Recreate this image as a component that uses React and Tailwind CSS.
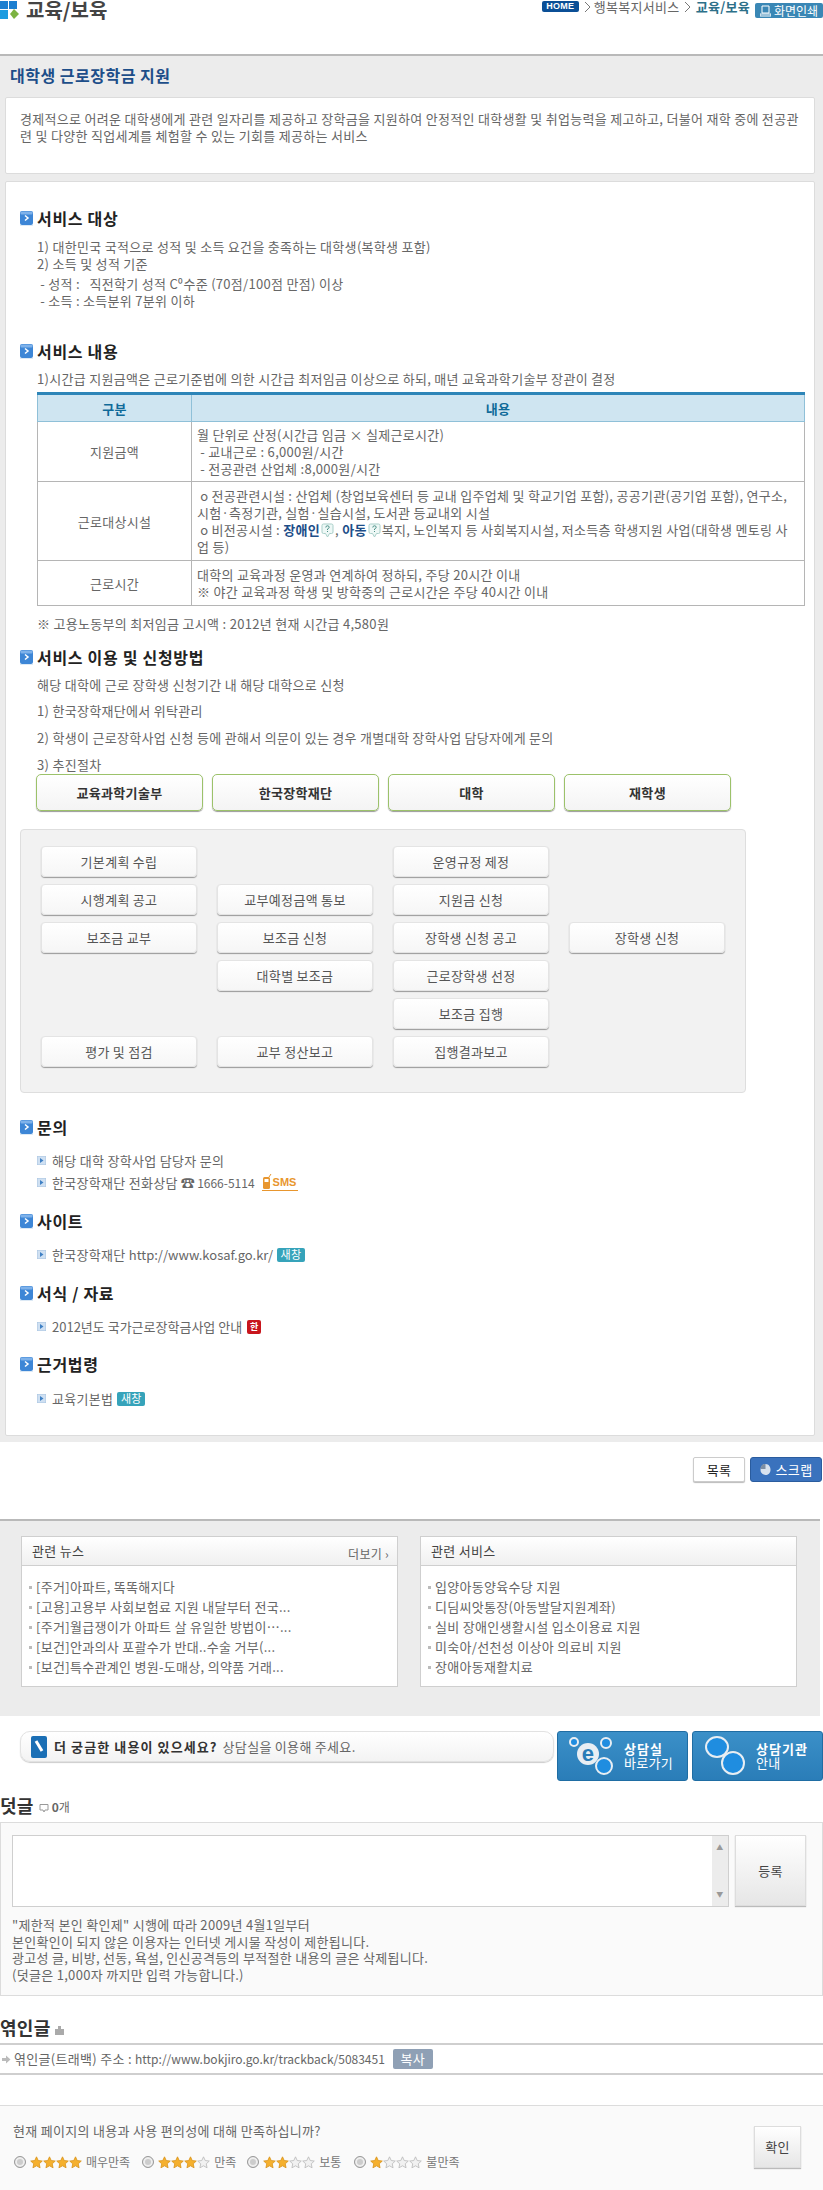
import React from 'react';

const SectionIcon = () => (
  <svg width="13" height="15" viewBox="0 0 13 15" className="shrink-0">
    <rect x="0" y="0" width="13" height="14" rx="2" fill="#3d86d6" />
    <rect x="0.5" y="0.5" width="12" height="3" rx="1" fill="#7fb2ea" />
    <rect x="0" y="14" width="13" height="1" fill="#dce9f5" />
    <path d="M5 4.5 L8 7 L5 9.5" fill="none" stroke="#ffffff" strokeWidth="1.5" />
  </svg>
);

const SectionTitle = ({ children }) => (
  <h3 className="flex h-5 items-center gap-[4px] pl-[14px] text-[16px] font-bold leading-5 tracking-[0.7px] text-[#222]">
    <SectionIcon />
    <span>{children}</span>
  </h3>
);

const Line = ({ className = '', children }) => (
  <p className={`h-[17px] whitespace-nowrap pl-[31px] leading-[17px] ${className}`}>{children}</p>
);

const ListItem = ({ className = '', children }) => (
  <div className={`flex h-[17px] items-center whitespace-nowrap pl-[31px] leading-[17px] ${className}`}>
    <svg width="9" height="9" viewBox="0 0 9 9" className="mr-[6px] shrink-0">
      <rect x="0" y="0" width="9" height="9" fill="#cfe0f2" stroke="#a9c4e0" />
      <path d="M3 2 L6.5 4.5 L3 7 Z" fill="#3f80c4" />
    </svg>
    {children}
  </div>
);

const NewWin = () => (
  <span className="ml-[4px] inline-flex h-[14px] w-[28px] items-center justify-center rounded-[2px] bg-[#36a3ba] text-[11px] leading-none text-white">
    새창
  </span>
);

const Help = () => (
  <svg width="13" height="15" viewBox="0 0 13 15" className="mx-[1px] inline-block align-middle">
    <path d="M2.5 1 H10.5 Q12 1 12 2.5 V9 Q12 10.5 10.5 10.5 H8.5 L6.5 14 L4.5 10.5 H2.5 Q1 10.5 1 9 V2.5 Q1 1 2.5 1 Z" fill="#eef8f6" stroke="#a9cfc9" />
    <path d="M4.8 4.5 Q4.8 2.8 6.5 2.8 Q8.2 2.8 8.2 4.3 Q8.2 5.3 6.5 6 V7" fill="none" stroke="#4a8f86" />
    <rect x="6" y="8" width="1" height="1" fill="#4a8f86" />
  </svg>
);

const Chevron = ({ className = '' }) => (
  <svg width="7" height="12" viewBox="0 0 7 12" className={`mt-[1px] shrink-0 ${className}`}>
    <path d="M1 1 L6 6 L1 11" fill="none" stroke="#777" />
  </svg>
);

const FlowButton = ({ className = '', children }) => (
  <div className={`flex h-[31px] items-center justify-center rounded-[4px] border border-[#e4e4e4] bg-gradient-to-b from-white to-[#f6f6f6] text-[#555] shadow-[0_1px_1px_#999] ${className}`}>
    {children}
  </div>
);

const Star = ({ on }) => (
  <svg width="13" height="13" viewBox="0 0 24 24">
    <path
      d="M12 1.5l3.2 6.9 7.5.9-5.6 5.1 1.5 7.4L12 18.1l-6.6 3.7 1.5-7.4L1.3 9.3l7.5-.9z"
      fill={on ? '#f5b02e' : '#f1f1f1'}
      stroke={on ? '#d9931a' : '#b9b9b9'}
      strokeWidth="1.5"
    />
  </svg>
);

const Rating = ({ count, label, className = '' }) => (
  <div className={`flex items-center ${className}`}>
    <span className="mr-[4px] h-[12px] w-[12px] rounded-full border border-[#999] bg-[#ccc] shadow-[inset_0_0_0_2px_#eee]" />
    {[1, 2, 3, 4].map((n) => (
      <Star key={n} on={n <= count} />
    ))}
    <span className="ml-[4px] text-[12px] tracking-normal text-[#777]">{label}</span>
  </div>
);

const ListBox = ({ title, more, items }) => (
  <div className="h-[151px] w-[377px] border border-[#cfcfcf] bg-white">
    <div className="flex h-[29px] items-center justify-between border-b border-[#cfcfcf] bg-gradient-to-b from-white to-[#f0f0f0] pl-[10px] pr-[8px]">
      <span className="text-[#444]">{title}</span>
      {more && <span className="mt-[6px] text-[12px] text-[#666]">더보기 ›</span>}
    </div>
    <ul className="pl-[7px] pt-[11px]">
      {items.map((t) => (
        <li key={t} className="flex h-[20px] items-center whitespace-nowrap leading-[20px] text-[#666]">
          <span className="mr-[4px] h-[3px] w-[3px] bg-[#bbb]" />
          {t}
        </li>
      ))}
    </ul>
  </div>
);

const flowRows = [
  ['기본계획 수립', '', '운영규정 제정', ''],
  ['시행계획 공고', '교부예정금액 통보', '지원금 신청', ''],
  ['보조금 교부', '보조금 신청', '장학생 신청 공고', '장학생 신청'],
  ['', '대학별 보조금', '근로장학생 선정', ''],
  ['', '', '보조금 집행', ''],
  ['평가 및 점검', '교부 정산보고', '집행결과보고', ''],
];

export default function App() {
  return (
    <div className="h-[2190px] w-[823px] overflow-hidden bg-white font-['Noto_Sans_CJK_KR','Liberation_Sans',sans-serif] text-[13px] tracking-[0.3px] text-[#666]">
      {/* Page header */}
      <div className="flex h-[56px] items-start justify-between border-b-2 border-[#b9b9b9]">
        <div className="flex items-center">
          <svg width="19" height="19" viewBox="0 0 19 19">
            <rect x="0" y="0" width="8" height="8" fill="#1c7fd0" />
            <rect x="9" y="0" width="8" height="8" fill="#1c7fd0" />
            <rect x="0" y="9" width="8" height="9" fill="#1c9be0" />
            <path d="M14 8 L19 13 L14 18 L10 13 Z" fill="#7cb342" />
          </svg>
          <span className="ml-[7px] text-[20px] font-bold leading-[20px] tracking-normal text-[#444]">교육/보육</span>
        </div>
        <div className="flex items-start">
          <span className="mt-[1px] flex h-[11px] w-[37px] items-center justify-center rounded-[2px] bg-[#0b4f96] font-['Liberation_Sans',sans-serif] text-[9px] font-bold text-white">
            HOME
          </span>
          <Chevron className="ml-[5px]" />
          <span className="ml-[3px] text-[13px] leading-[14px]">행복복지서비스</span>
          <Chevron className="ml-[4px]" />
          <span className="ml-[5px] text-[13px] font-bold leading-[14px] text-[#2d7089]">교육/보육</span>
          <span className="ml-[5px] mt-[3px] flex h-[15px] w-[68px] items-center justify-center gap-[3px] rounded-[2px] bg-[#3a87b5] text-[12px] leading-none tracking-normal text-white">
            <svg width="11" height="12" viewBox="0 0 11 12">
              <path d="M2 1h7v7H2zM0 9h11v2H0z" fill="none" stroke="#fff" />
            </svg>
            화면인쇄
          </span>
        </div>
      </div>

      {/* Article */}
      <div className="h-[1386px] bg-[#ececec] px-[5px] pl-[5px]">
        <h2 className="pl-[5px] pt-[10px] text-[16px] font-bold leading-[18px] tracking-[0.5px] text-[#1d4e89]">대학생 근로장학금 지원</h2>
        <div className="mt-[13px] h-[77px] w-[810px] rounded-[2px] border border-[#dcdcdc] bg-white pl-[14px] pt-[12px] leading-[17px]">
          <p className="whitespace-nowrap">
            경제적으로 어려운 대학생에게 관련 일자리를 제공하고 장학금을 지원하여 안정적인 대학생활 및 취업능력을 제고하고, 더불어 재학 중에 전공관
            <br />
            련 및 다양한 직업세계를 체험할 수 있는 기회를 제공하는 서비스
          </p>
        </div>

        <div className="mt-[7px] h-[1255px] w-[810px] rounded-[2px] border border-[#dcdcdc] bg-white pt-[26px]">
          <SectionTitle>서비스 대상</SectionTitle>
          <Line className="mt-[10px]">1) 대한민국 국적으로 성적 및 소득 요건을 충족하는 대학생(복학생 포함)</Line>
          <Line>2) 소득 및 성적 기준</Line>
          <Line className="mt-[3px]">&nbsp;- 성적 :&nbsp;&nbsp; 직전학기 성적 C⁰수준 (70점/100점 만점) 이상</Line>
          <Line>&nbsp;- 소득 : 소득분위 7분위 이하</Line>

          <div className="mt-[32px]">
            <SectionTitle>서비스 내용</SectionTitle>
          </div>
          <Line className="mt-[9px]">1)시간급 지원금액은 근로기준법에 의한 시간급 최저임금 이상으로 하되, 매년 교육과학기술부 장관이 결정</Line>

          <table className="ml-[31px] mt-[5px] w-[768px] table-fixed border-collapse leading-[17px]">
            <colgroup>
              <col className="w-[154px]" />
              <col />
            </colgroup>
            <thead>
              <tr className="h-[28px] border-t-[3px] border-[#2d85b8] bg-[#cfe5f1] font-bold text-[#0f6a99]">
                <th className="border border-t-0 border-[#8fc0d8]">구분</th>
                <th className="border border-t-0 border-[#8fc0d8]">내용</th>
              </tr>
            </thead>
            <tbody>
              <tr className="h-[60px]">
                <td className="border border-[#b5b5b5] text-center">지원금액</td>
                <td className="whitespace-nowrap border border-[#b5b5b5] pl-[5px]">
                  월 단위로 산정(시간급 임금 × 실제근로시간)
                  <br />
                  &nbsp;- 교내근로 : 6,000원/시간
                  <br />
                  &nbsp;- 전공관련 산업체 :8,000원/시간
                </td>
              </tr>
              <tr className="h-[79px]">
                <td className="border border-[#b5b5b5] text-center">근로대상시설</td>
                <td className="whitespace-nowrap border border-[#b5b5b5] pl-[5px]">
                  &nbsp;o 전공관련시설 : 산업체 (창업보육센터 등 교내 입주업체 및 학교기업 포함), 공공기관(공기업 포함), 연구소,
                  <br />
                  시험·측정기관, 실험·실습시설, 도서관 등교내외 시설
                  <br />
                  &nbsp;o 비전공시설 : <b className="text-[#1d4e89]">장애인</b>
                  <Help />, <b className="text-[#1d4e89]">아동</b>
                  <Help />복지, 노인복지 등 사회복지시설, 저소득층 학생지원 사업(대학생 멘토링 사
                  <br />
                  업 등)
                </td>
              </tr>
              <tr className="h-[45px]">
                <td className="border border-[#b5b5b5] text-center">근로시간</td>
                <td className="whitespace-nowrap border border-[#b5b5b5] pl-[5px]">
                  대학의 교육과정 운영과 연계하여 정하되, 주당 20시간 이내
                  <br />※ 야간 교육과정 학생 및 방학중의 근로시간은 주당 40시간 이내
                </td>
              </tr>
            </tbody>
          </table>
          <Line className="mt-[9px]">※ 고용노동부의 최저임금 고시액 : 2012년 현재 시간급 4,580원</Line>

          <div className="mt-[15px]">
            <SectionTitle>서비스 이용 및 신청방법</SectionTitle>
          </div>
          <Line className="mt-[9px]">해당 대학에 근로 장학생 신청기간 내 해당 대학으로 신청</Line>
          <Line className="mt-[9px]">1) 한국장학재단에서 위탁관리</Line>
          <Line className="mt-[10px]">2) 학생이 근로장학사업 신청 등에 관해서 의문이 있는 경우 개별대학 장학사업 담당자에게 문의</Line>
          <Line className="mt-[10px]">3) 추진절차</Line>

          <div className="ml-[30px] mt-[1px] flex h-[37px] w-[695px] justify-between">
            {['교육과학기술부', '한국장학재단', '대학', '재학생'].map((t) => (
              <div
                key={t}
                className="flex h-[37px] w-[167px] items-center justify-center rounded-[5px] border border-[#9cc26a] bg-gradient-to-b from-white to-[#f4f4f4] font-bold text-[#333] shadow-[0_1px_1px_#9a9a9a]"
              >
                {t}
              </div>
            ))}
          </div>

          <div className="ml-[14px] mt-[18px] h-[264px] w-[726px] rounded-[4px] border border-[#dedede] bg-[#f2f2f2] pl-[20px] pt-[16px]">
            <div className="grid w-[684px] grid-cols-[156px_156px_156px_156px] gap-x-[20px] gap-y-[7px]">
              {flowRows.flat().map((t, i) => (t ? <FlowButton key={i}>{t}</FlowButton> : <div key={i} className="h-[31px]" />))}
            </div>
          </div>

          <div className="mt-[24px]">
            <SectionTitle>문의</SectionTitle>
          </div>
          <ListItem className="mt-[15px]">해당 대학 장학사업 담당자 문의</ListItem>
          <ListItem className="mt-[5px]">
            한국장학재단 전화상담 <span className="ml-[3px] text-[14px]">☎</span>
            <span className="ml-[2px] text-[12px] tracking-normal">1666-5114</span>
            <span className="ml-[7px] flex h-[17px] w-[36px] items-center border-b border-[#e8962e] font-['Liberation_Sans',sans-serif] text-[11px] font-bold tracking-normal text-[#e8962e]">
              <svg width="10" height="16" viewBox="0 0 10 16" className="mr-[1px] shrink-0">
                <path d="M7 3 L9 0" stroke="#e8962e" />
                <rect x="1" y="3" width="7" height="12" rx="1.5" fill="#e8962e" />
                <rect x="2.5" y="5" width="4" height="3" fill="#fff" />
              </svg>
              SMS
            </span>
          </ListItem>

          <div className="mt-[20px]">
            <SectionTitle>사이트</SectionTitle>
          </div>
          <ListItem className="mt-[15px]">
            한국장학재단&nbsp;<span className="tracking-normal">http://www.kosaf.go.kr/</span>
            <NewWin />
          </ListItem>

          <div className="mt-[20px]">
            <SectionTitle>서식 / 자료</SectionTitle>
          </div>
          <ListItem className="mt-[15px]">
            <span className="tracking-normal">2012년도 국가근로장학금사업 안내</span>
            <span className="ml-[5px] flex h-[14px] w-[14px] items-center justify-center rounded-[2px] bg-[#c8161d] text-[9px] font-bold leading-none text-white">
              한
            </span>
          </ListItem>

          <div className="mt-[19px]">
            <SectionTitle>근거법령</SectionTitle>
          </div>
          <ListItem className="mt-[16px]">
            교육기본법
            <NewWin />
          </ListItem>
        </div>
      </div>

      {/* Actions */}
      <div className="flex h-[77px] justify-end gap-[5px] pr-[1px] pt-[15px]">
        <button className="flex h-[25px] w-[52px] items-center justify-center rounded-[2px] border border-[#ccc] bg-white text-[#222] shadow-[0_1px_1px_#bbb]">
          목록
        </button>
        <button className="flex h-[25px] w-[72px] items-center justify-center gap-[5px] rounded-[3px] border border-[#2a5c9e] bg-[#3a72bd] text-white">
          <svg width="11" height="13" viewBox="0 0 11 13">
            <path d="M5.5 1 C9 1 10.5 4 10.5 7 C10.5 10 8 12 5.5 12 C3 12 0.5 10 0.5 7 C0.5 4 2 1 5.5 1 Z" fill="#d8e2ee" />
            <path d="M5.5 1 V6 H0.5 C0.5 3 2 1 5.5 1 Z" fill="#7d8ea3" />
          </svg>
          스크랩
        </button>
      </div>

      {/* Related */}
      <div className="h-[197px] w-[820px] border-t-2 border-[#b9b9b9] bg-[#ececec] pl-[21px] pt-[15px]">
        <div className="flex gap-[22px]">
          <ListBox
            title="관련 뉴스"
            more
            items={[
              '[주거]아파트, 똑똑해지다',
              '[고용]고용부 사회보험료 지원 내달부터 전국...',
              '[주거]월급쟁이가 아파트 살 유일한 방법이…...',
              '[보건]안과의사 포괄수가 반대..수술 거부(...',
              '[보건]특수관계인 병원-도매상, 의약품 거래...',
            ]}
          />
          <ListBox
            title="관련 서비스"
            items={['입양아동양육수당 지원', '디딤씨앗통장(아동발달지원계좌)', '실비 장애인생활시설 입소이용료 지원', '미숙아/선천성 이상아 의료비 지원', '장애아동재활치료']}
          />
        </div>
      </div>

      {/* Counsel banner */}
      <div className="mt-[15px] flex h-[50px] items-start pl-[20px]">
        <div className="flex h-[31px] w-[534px] items-center rounded-[10px] border border-[#e2e2e2] bg-gradient-to-b from-white to-[#f3f3f3] pl-[10px] shadow-[0_1px_1px_#ccc]">
          <svg width="16" height="22" viewBox="0 0 16 22" className="mr-[7px]">
            <rect width="16" height="22" rx="2" fill="#1b6fb5" />
            <path d="M5 5 L11 15" stroke="#fff" strokeWidth="3" />
          </svg>
          <b className="mr-[5px] tracking-[1.1px] text-[#333]">더 궁금한 내용이 있으세요?</b>
          상담실을 이용해 주세요.
        </div>
        <div className="ml-[3px] flex h-[50px] w-[131px] items-center rounded-[3px] border border-[#1f6da3] bg-gradient-to-b from-[#3b90c8] to-[#2a7db8] pl-[10px] leading-[14px] text-white">
          <svg width="46" height="40" viewBox="0 0 46 40" className="mr-[10px]">
            <circle cx="6" cy="6" r="4" fill="#1f8de0" stroke="#e8eef3" strokeWidth="2" />
            <circle cx="38" cy="7" r="5" fill="#1f8de0" stroke="#e8eef3" strokeWidth="2" />
            <circle cx="20" cy="18" r="11" fill="#e8eef3" />
            <text x="20" y="25" textAnchor="middle" fontSize="22" fontWeight="700" fontFamily="Liberation Sans" fill="#2a7db8">e</text>
            <circle cx="36" cy="30" r="8" fill="#1f8de0" stroke="#e8eef3" strokeWidth="2" />
          </svg>
          <div>
            <b className="block tracking-[1px]">상담실</b>바로가기
          </div>
        </div>
        <div className="ml-[4px] flex h-[50px] w-[131px] items-center rounded-[3px] border border-[#1f6da3] bg-gradient-to-b from-[#3b90c8] to-[#2a7db8] pl-[12px] leading-[14px] text-white">
          <svg width="40" height="42" viewBox="0 0 40 42" className="mr-[11px]">
            <ellipse cx="12" cy="12" rx="11" ry="10" fill="#1f8de0" stroke="#e8eef3" strokeWidth="2" />
            <ellipse cx="28" cy="28" rx="11" ry="11" fill="#1f8de0" stroke="#e8eef3" strokeWidth="2" />
          </svg>
          <div>
            <b className="block tracking-[1px]">상담기관</b>안내
          </div>
        </div>
      </div>

      {/* Comments */}
      <div className="mt-[7px] flex h-[34px] items-center">
        <span className="text-[18px] font-bold text-[#333]">덧글</span>
        <svg width="10" height="10" viewBox="0 0 10 10" className="ml-[5px] mt-[5px]">
          <path d="M1 1.5 H9 V7 H6 L5 9 L4 7 H1 Z" fill="none" stroke="#999" />
        </svg>
        <span className="ml-[3px] mt-[4px] text-[12px] tracking-normal">
          <b>0</b>개
        </span>
      </div>
      <div className="h-[174px] border border-[#dcdcdc] bg-[#fafafa] pl-[11px] pt-[12px]">
        <div className="flex items-start">
          <div className="flex h-[72px] w-[717px] justify-end border border-[#cfcfcf] bg-white">
            <div className="flex w-[16px] flex-col items-center justify-between bg-[#ececec] py-[8px] text-[7px] leading-none text-[#999]">
              <span>▲</span>
              <span>▼</span>
            </div>
          </div>
          <div className="ml-[6px] flex h-[71px] w-[71px] items-center justify-center border border-[#ddd] bg-gradient-to-b from-white to-[#e6e6e6] text-[#444] shadow-[0_1px_1px_#bbb]">
            등록
          </div>
        </div>
        <div className="mt-[10px] leading-[16.6px]">
          "제한적 본인 확인제" 시행에 따라 2009년 4월1일부터
          <br />
          본인확인이 되지 않은 이용자는 인터넷 게시물 작성이 제한됩니다.
          <br />
          광고성 글, 비방, 선동, 욕설, 인신공격등의 부적절한 내용의 글은 삭제됩니다.
          <br />
          (덧글은 1,000자 까지만 입력 가능합니다.)
        </div>
      </div>

      {/* Trackback */}
      <div className="mt-[16px] flex h-[31px] items-center">
        <span className="text-[18px] font-bold text-[#333]">엮인글</span>
        <svg width="11" height="11" viewBox="0 0 11 11" className="ml-[3px] mt-[5px]">
          <path d="M4 1 H7 V4 H10 V10 H1 V4 H4 Z" fill="#aaa" />
        </svg>
      </div>
      <div className="flex h-[32px] items-center border-y-2 border-[#cfcfcf]">
        <svg width="9" height="9" viewBox="0 0 9 9" className="ml-[2px] mr-[3px]">
          <path d="M0 3 H4 V0.5 L8.5 4.5 L4 8.5 V6 H0 Z" fill="#bbb" />
        </svg>
        엮인글(트래백) 주소 :&nbsp;<span className="text-[12px] tracking-normal">http://www.bokjiro.go.kr/trackback/5083451</span>
        <span className="ml-[8px] flex h-[20px] w-[40px] items-center justify-center rounded-[2px] bg-[#8fa0b5] text-white">복사</span>
      </div>

      {/* Survey */}
      <div className="mt-[30px] flex h-[86px] justify-between border-y border-[#dcdcdc] bg-[#fafafa] pl-[13px] pr-[22px]">
        <div className="pt-[16px]">
          <p className="leading-[17px]">현재 페이지의 내용과 사용 편의성에 대해 만족하십니까?</p>
          <div className="mt-[14px] flex">
            <Rating count={4} label="매우만족" className="ml-[1px]" />
            <Rating count={3} label="만족" className="ml-[12px]" />
            <Rating count={2} label="보통" className="ml-[11px]" />
            <Rating count={1} label="불만족" className="ml-[13px]" />
          </div>
        </div>
        <div className="mt-[20px] flex h-[42px] w-[47px] items-center justify-center border border-[#ddd] bg-gradient-to-b from-white to-[#e6e6e6] text-[#444] shadow-[0_1px_1px_#bbb]">
          확인
        </div>
      </div>
    </div>
  );
}
